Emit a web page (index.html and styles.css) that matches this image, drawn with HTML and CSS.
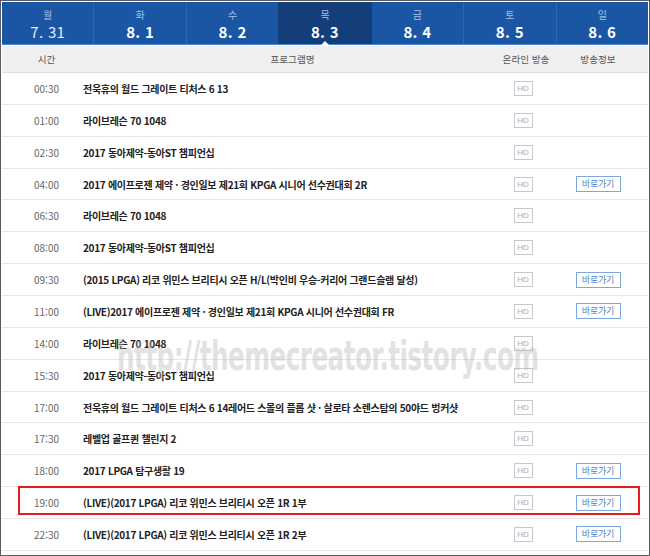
FILE: index.html
```html
<!DOCTYPE html>
<html lang="ko">
<head>
<meta charset="utf-8">
<link rel="stylesheet" href="styles.css">
</head>
<body>
<div class="frame">
  <ul class="days">
    <li class="day past"><span class="dow">월</span><span class="date">7. 31</span></li>
    <li class="day"><span class="dow">화</span><span class="date">8. 1</span></li>
    <li class="day"><span class="dow">수</span><span class="date">8. 2</span></li>
    <li class="day on"><span class="dow">목</span><span class="date">8. 3</span></li>
    <li class="day"><span class="dow">금</span><span class="date">8. 4</span></li>
    <li class="day"><span class="dow">토</span><span class="date">8. 5</span></li>
    <li class="day"><span class="dow">일</span><span class="date">8. 6</span></li>
  </ul>
  <div class="schedule">
    <div class="row head">
      <span class="time">시간</span>
      <span class="title">프로그램명</span>
      <span class="online">온라인 방송</span>
      <span class="info">방송정보</span>
    </div>
    <div class="row"><span class="time">00:30</span><span class="title">전욱휴의 월드 그레이트 티처스 6 13</span><span class="online"><span class="hd">HD</span></span><span class="info"></span></div>
    <div class="row"><span class="time">01:00</span><span class="title">라이브레슨 70 1048</span><span class="online"><span class="hd">HD</span></span><span class="info"></span></div>
    <div class="row"><span class="time">02:30</span><span class="title">2017 동아제약-동아ST 챔피언십</span><span class="online"><span class="hd">HD</span></span><span class="info"></span></div>
    <div class="row"><span class="time">04:00</span><span class="title">2017 에이프로젠 제약 · 경인일보 제21회 KPGA 시니어 선수권대회 2R</span><span class="online"><span class="hd">HD</span></span><span class="info"><a class="go">바로가기</a></span></div>
    <div class="row"><span class="time">06:30</span><span class="title">라이브레슨 70 1048</span><span class="online"><span class="hd">HD</span></span><span class="info"></span></div>
    <div class="row"><span class="time">08:00</span><span class="title">2017 동아제약-동아ST 챔피언십</span><span class="online"><span class="hd">HD</span></span><span class="info"></span></div>
    <div class="row"><span class="time">09:30</span><span class="title">(2015 LPGA) 리코 위민스 브리티시 오픈 H/L(박인비 우승-커리어 그랜드슬램 달성)</span><span class="online"><span class="hd">HD</span></span><span class="info"><a class="go">바로가기</a></span></div>
    <div class="row"><span class="time">11:00</span><span class="title">(LIVE)2017 에이프로젠 제약 · 경인일보 제21회 KPGA 시니어 선수권대회 FR</span><span class="online"><span class="hd">HD</span></span><span class="info"><a class="go">바로가기</a></span></div>
    <div class="row"><span class="time">14:00</span><span class="title">라이브레슨 70 1048</span><span class="online"><span class="hd">HD</span></span><span class="info"></span></div>
    <div class="row"><span class="time">15:30</span><span class="title">2017 동아제약-동아ST 챔피언십</span><span class="online"><span class="hd">HD</span></span><span class="info"></span></div>
    <div class="row"><span class="time">17:00</span><span class="title">전욱휴의 월드 그레이트 티처스 6 14레어드 스몰의 플롭 샷 · 살로타 소렌스탐의 50야드 벙커샷</span><span class="online"><span class="hd">HD</span></span><span class="info"></span></div>
    <div class="row"><span class="time">17:30</span><span class="title">레벨업 골프퀸 챌린지 2</span><span class="online"><span class="hd">HD</span></span><span class="info"></span></div>
    <div class="row"><span class="time">18:00</span><span class="title">2017 LPGA 탐구생활 19</span><span class="online"><span class="hd">HD</span></span><span class="info"><a class="go">바로가기</a></span></div>
    <div class="row marked"><span class="time">19:00</span><span class="title">(LIVE)(2017 LPGA) 리코 위민스 브리티시 오픈 1R 1부</span><span class="online"><span class="hd">HD</span></span><span class="info"><a class="go">바로가기</a></span><span class="mark"></span></div>
    <div class="row"><span class="time">22:30</span><span class="title">(LIVE)(2017 LPGA) 리코 위민스 브리티시 오픈 1R 2부</span><span class="online"><span class="hd">HD</span></span><span class="info"><a class="go">바로가기</a></span></div>
  </div>
  <div class="watermark">http://themecreator.tistory.com</div>
</div>
</body>
</html>
```
FILE: styles.css
```css
body {
  margin: 0;
  font-family: "Noto Sans CJK KR", "Noto Sans", sans-serif;
  background: #fff;
}
.frame {
  width: 650px;
  height: 556px;
  box-sizing: border-box;
  border: 1px solid #5c5c5c;
  padding: 1px;
  position: relative;
  overflow: hidden;
  background: #fff;
}
.days {
  display: flex;
  margin: 0;
  padding: 0;
  list-style: none;
  height: 42px;
  background: #1b56a4;
  border-bottom: 1px solid #4a86d2;
}
.day {
  flex: 1;
  display: flex;
  flex-direction: column;
  align-items: center;
  padding-top: 7px;
  border-left: 1px solid #3069b3;
  color: #fff;
  position: relative;
}
.day:first-child { border-left: 0; }
.dow {
  font-size: 10px;
  line-height: 12px;
  color: #a6c0e6;
}
.date {
  font-size: 15px;
  line-height: 17px;
  font-weight: bold;
  margin-top: 2px;
  letter-spacing: 0.3px;
}
.day.past .date { font-weight: normal; color: #e4ecf8; }
.day.on { background: #133e79; border-left-color: #133e79; }
.day.on + .day { border-left-color: #133e79; }
.day.on::after {
  content: "";
  position: absolute;
  left: 50%;
  bottom: -1px;
  margin-left: -4px;
  border-left: 4px solid transparent;
  border-right: 4px solid transparent;
  border-bottom: 4px solid #fff;
}
.schedule { margin-top: 1px; }
.row {
  display: flex;
  align-items: center;
  height: 31.86px;
  box-sizing: border-box;
  border-bottom: 1px solid #e6e6e6;
  padding-right: 10px;
  position: relative;
  font-size: 10px;
}
.row.head {
  height: 27px;
  background: #f0f0f0;
  border-bottom: 1px solid #dcdcdc;
  color: #555;
  font-size: 9.6px;
}
.time {
  width: 81px;
  padding-left: 8px;
  box-sizing: border-box;
  text-align: center;
  color: #666;
}
.head .time { color: #555; }
.title {
  flex: 1;
  font-weight: bold;
  color: #222;
  letter-spacing: -0.3px;
  white-space: nowrap;
}
.head .title {
  font-weight: normal;
  color: #555;
  text-align: center;
  padding-left: 14px;
  letter-spacing: 0;
}
.online {
  width: 70px;
  text-align: center;
  display: flex;
  justify-content: center;
}
.head .online { padding-left: 6px; box-sizing: border-box; }
.info {
  width: 80px;
  display: flex;
  justify-content: center;
}
.hd {
  width: 19px;
  height: 15px;
  box-sizing: border-box;
  border: 1px solid #c8c8c8;
  color: #aaa;
  font-size: 8px;
  line-height: 13px;
  text-align: center;
  font-family: "Liberation Sans", sans-serif;
}
.go {
  width: 45px;
  height: 16px;
  box-sizing: border-box;
  border: 1px solid #7aa6e6;
  color: #4f7fc8;
  font-size: 9px;
  line-height: 14px;
  text-align: center;
  letter-spacing: -0.2px;
}
.mark {
  position: absolute;
  left: 16px;
  right: 8px;
  top: -1px;
  height: 29px;
  box-sizing: border-box;
  border: 2px solid #e51a1a;
}
.watermark {
  position: absolute;
  left: 116px;
  top: 331px;
  font-family: "DejaVu Sans", "Liberation Sans", sans-serif;
  font-weight: bold;
  font-size: 40px;
  line-height: 48px;
  color: rgba(185, 185, 185, 0.42);
  transform: scaleX(0.62);
  transform-origin: 0 0;
  white-space: nowrap;
  letter-spacing: -1px;
  pointer-events: none;
}
```
